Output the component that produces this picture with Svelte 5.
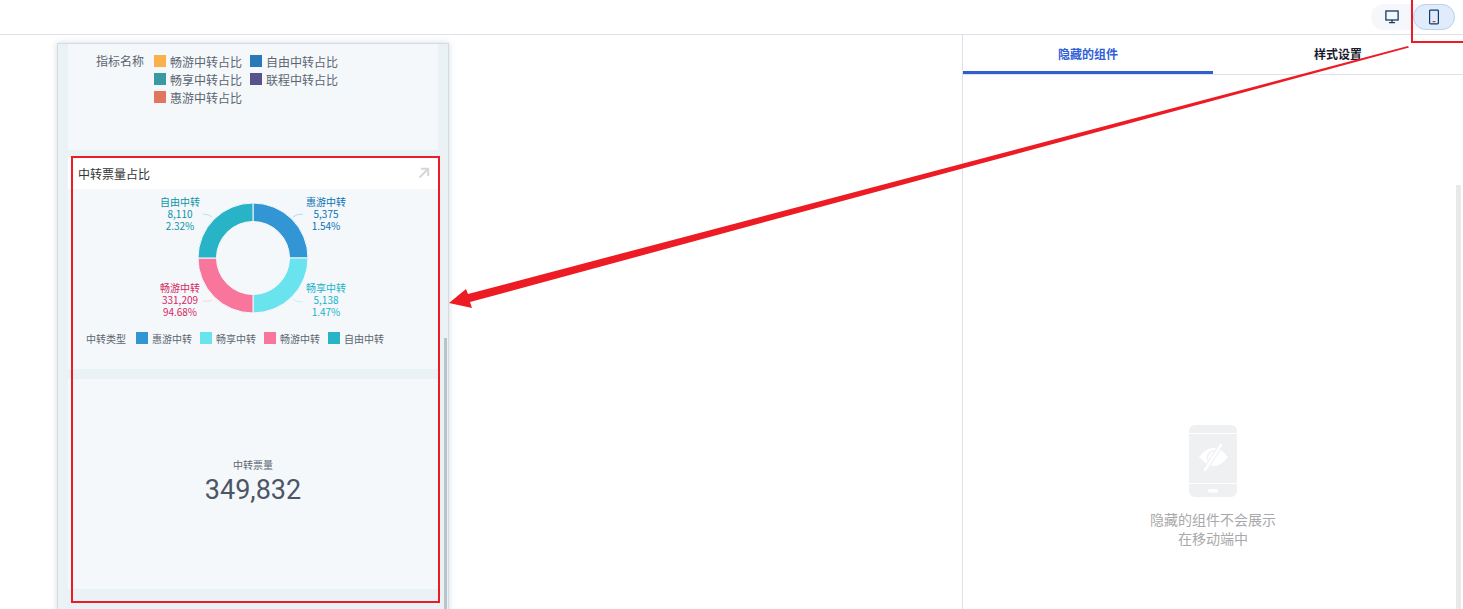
<script>
  const cx = 185;
  const cy = 69;
  const outer = 55;
  const inner = 36.5;

  const slices = [
    { name: "惠游中转", color: "#3196d3" },
    { name: "畅享中转", color: "#69e3ee" },
    { name: "畅游中转", color: "#f8769b" },
    { name: "自由中转", color: "#28b4c6" }
  ];

  const labels = [
    { lines: ["惠游中转", "5,375", "1.54%"], left: 228, top: 7, color: "#0b72b4" },
    { lines: ["畅享中转", "5,138", "1.47%"], left: 228, top: 93, color: "#17b4c8" },
    { lines: ["畅游中转", "331,209", "94.68%"], left: 82, top: 93, color: "#d9265f" },
    { lines: ["自由中转", "8,110", "2.32%"], left: 82, top: 7, color: "#0e93a6" }
  ];

  const leaders = [
    { d: "M225 28 Q228 25 235 25", color: "#b5dcf2" },
    { d: "M225 110 Q228 113 235 113", color: "#c6f2f6" },
    { d: "M144 111 Q140 113 135 112", color: "#fbd0dd" },
    { d: "M144 28 Q141 25 135 25", color: "#b5e3e9" }
  ];

  const legend = [
    { name: "畅游中转占比", color: "#fbb14b" },
    { name: "自由中转占比", color: "#2a78b8" },
    { name: "畅享中转占比", color: "#3a9aa3" },
    { name: "联程中转占比", color: "#57538c" },
    { name: "惠游中转占比", color: "#e2755f" }
  ];

  const point = (r, deg) => {
    const a = ((deg - 90) * Math.PI) / 180;
    return `${cx + r * Math.cos(a)} ${cy + r * Math.sin(a)}`;
  };

  const arc = (i) => {
    const s = i * 90;
    const e = s + 90;
    return `M${point(outer, s)} A${outer} ${outer} 0 0 1 ${point(outer, e)} L${point(inner, e)} A${inner} ${inner} 0 0 0 ${point(inner, s)} Z`;
  };
</script>

<div class="page">
  <header class="topbar">
    <div class="switch">
      <button class="mode" aria-label="桌面端">
        <svg width="14" height="14" viewBox="0 0 14 14" fill="none" stroke="#0f3a6e" stroke-width="1.3">
          <rect x="0.9" y="1" width="12.2" height="9" />
          <path d="M7 10v2.4M4 12.6h6" />
        </svg>
      </button>
      <button class="mode active" aria-label="移动端">
        <svg width="14" height="16" viewBox="0 0 14 16" fill="none" stroke="#0f3a6e" stroke-width="1.2">
          <rect x="2.6" y="1.1" width="8.8" height="13.8" rx="0.8" />
          <path d="M5.6 12.6h2.8" stroke="#c0394f" />
        </svg>
      </button>
    </div>
  </header>

  <div class="workspace">
    <main class="canvas">
      <div class="phone">
        <span class="phone-scroll"></span>
        <section class="block legend-block">
          <span class="legend-title">指标名称</span>
          <div class="legend-grid">
            {#each legend as item}
              <span class="legend-item">
                <i class="swatch" style="background: {item.color}"></i>{item.name}
              </span>
            {/each}
          </div>
        </section>

        <section class="block chart-block">
          <div class="chart-head">
            <span>中转票量占比</span>
            <svg width="12" height="12" viewBox="0 0 12 12" fill="none" stroke="#d6d7d9" stroke-width="2">
              <path d="M1.5 10.5L10 2M3 1.8H10.2V9" />
            </svg>
          </div>
          <div class="chart">
            <svg class="donut" width="370" height="142" viewBox="0 0 370 142">
              {#each slices as slice, i}
                <path d={arc(i)} fill={slice.color} stroke="#f4f8fb" stroke-width="1" />
              {/each}
              {#each leaders as line}
                <path d={line.d} fill="none" stroke={line.color} stroke-width="1" />
              {/each}
            </svg>
            {#each labels as label}
              <div class="slice-label" style="left: {label.left}px; top: {label.top}px; color: {label.color}">
                {#each label.lines as text}
                  <div>{text}</div>
                {/each}
              </div>
            {/each}
          </div>
          <div class="chart-legend">
            <span class="chart-legend-title">中转类型</span>
            {#each slices as slice}
              <span class="chart-legend-item">
                <i class="swatch" style="background: {slice.color}"></i>{slice.name}
              </span>
            {/each}
          </div>
        </section>

        <section class="block number-block">
          <div class="number-title">中转票量</div>
          <div class="number-value">349,832</div>
        </section>
      </div>
    </main>

    <aside class="panel">
      <div class="tabs">
        <div class="tab active">隐藏的组件</div>
        <div class="tab">样式设置</div>
      </div>
      <div class="empty">
        <svg width="48" height="72" viewBox="0 0 48 72">
          <rect width="48" height="72" rx="6" fill="#eff0f2" />
          <path d="M0 8.5h48M0 58.5h48" stroke="#fff" stroke-width="1" />
          <rect x="19" y="64" width="10" height="3.4" rx="1.7" fill="#fff" />
          <path d="M10 32 C16 25 20 23 25 23 C30 23 34 26 39 32 C34 38 30 41 25 41 C20 41 16 38 10 32Z" fill="#fff" />
          <path d="M19.5 36 A6.5 6.5 0 0 1 25 26" fill="none" stroke="#eff0f2" stroke-width="1.4" />
          <path d="M32 20L16 45" stroke="#eff0f2" stroke-width="5" />
          <path d="M32 20L16 45" stroke="#fff" stroke-width="2.4" stroke-linecap="round" />
        </svg>
        <p>隐藏的组件不会展示<br />在移动端中</p>
      </div>
      <span class="panel-scroll"></span>
    </aside>
  </div>

  <svg class="marks" width="1463" height="609" viewBox="0 0 1463 609" fill="none">
    <rect x="1412" y="-3" width="55" height="45" stroke="#ed1c24" stroke-width="2" />
    <rect x="72" y="157" width="367" height="445" stroke="#ed1c24" stroke-width="2" />
    <polygon points="1408,46 1409,47.5 470,302 472,308 449,303 466,289 468,294" fill="#ed1c24" />
  </svg>
</div>

<style>
  :global(body) {
    overflow: hidden;
    background: #fff;
  }

  .page {
    position: relative;
    height: 609px;
    display: flex;
    flex-direction: column;
    overflow: hidden;
    font-family: "Noto Sans CJK SC", "Noto Sans", sans-serif;
    font-size: 12px;
  }

  .topbar {
    display: flex;
    justify-content: flex-end;
    align-items: flex-start;
    padding: 4px 8px 0 0;
    height: 30px;
    border-bottom: 1px solid #dfe1ea;
  }

  .switch {
    display: flex;
    background: #f5f7fb;
    border-radius: 13px;
  }

  .mode {
    width: 42px;
    height: 26px;
    padding: 0;
    display: flex;
    align-items: center;
    justify-content: center;
    background: none;
    border: 1px solid transparent;
    border-radius: 13px;
  }

  .mode.active {
    background: #e0ebfb;
    border-color: #bdd0f0;
  }

  .workspace {
    flex: 1;
    display: flex;
    min-height: 0;
  }

  .canvas {
    flex: 0 0 963px;
    padding: 8px 0 0 57px;
    box-sizing: border-box;
    border-right: 1px solid #dfe1ea;
  }

  .phone {
    position: relative;
    width: 392px;
    height: 640px;
    box-sizing: border-box;
    padding: 0 10px;
    background: #ebf2f5;
    border: 1px solid #d5dbe3;
    box-shadow: 0 0 6px rgba(90, 100, 130, 0.25);
  }

  .phone-scroll {
    position: absolute;
    left: 386px;
    top: 294px;
    bottom: 0;
    width: 3px;
    background: #b8c4c8;
  }

  .block {
    background: #f4f8fb;
  }

  .legend-block {
    height: 106px;
    margin-bottom: 7px;
    padding: 8px 0 0 28px;
    box-sizing: border-box;
    display: flex;
    gap: 10px;
    color: #5c6570;
  }

  .legend-title {
    line-height: 18px;
  }

  .legend-grid {
    display: grid;
    grid-template-columns: 96px 96px;
    grid-auto-rows: 18px;
  }

  .legend-item {
    display: flex;
    align-items: center;
    gap: 4px;
  }

  .swatch {
    flex: none;
    width: 12px;
    height: 12px;
  }

  .chart-block {
    height: 212px;
    margin-bottom: 10px;
  }

  .chart-head {
    height: 32px;
    padding: 0 8px 0 10px;
    display: flex;
    align-items: center;
    justify-content: space-between;
    background: #fff;
    color: #333;
  }

  .chart {
    position: relative;
    height: 142px;
  }

  .donut {
    display: block;
  }

  .slice-label {
    position: absolute;
    width: 60px;
    font-size: 10px;
    line-height: 12px;
    text-align: center;
  }

  .chart-legend {
    display: flex;
    align-items: center;
    gap: 8px;
    height: 14px;
    padding-left: 18px;
    font-size: 10px;
    color: #5c6570;
  }

  .chart-legend-title {
    margin-right: 2px;
  }

  .chart-legend-item {
    display: flex;
    align-items: center;
    gap: 4px;
  }

  .number-block {
    height: 208px;
    padding-bottom: 2px;
    display: flex;
    flex-direction: column;
    align-items: center;
    justify-content: center;
  }

  .number-title {
    font-size: 10px;
    line-height: 14px;
    color: #5c6570;
  }

  .number-value {
    font-family: Roboto, sans-serif;
    font-size: 27px;
    line-height: 36px;
    color: #4d5666;
  }

  .panel {
    position: relative;
    flex: 1;
    min-width: 0;
  }

  .tabs {
    display: flex;
    height: 39px;
    border-bottom: 1px solid #dfe1ea;
  }

  .tab {
    flex: 1;
    line-height: 38px;
    text-align: center;
    font-weight: 700;
    color: #1a1a2e;
  }

  .tab.active {
    height: 36px;
    color: #3060d8;
    border-bottom: 3px solid #3060d0;
  }

  .empty {
    display: flex;
    flex-direction: column;
    align-items: center;
    padding-top: 350px;
  }

  .empty svg {
    display: block;
  }

  .empty p {
    margin: 13px 0 0;
    font-size: 14px;
    line-height: 19px;
    text-align: center;
    color: #a9a9ab;
  }

  .panel-scroll {
    position: absolute;
    right: 2px;
    top: 150px;
    bottom: 0;
    width: 5px;
    background: #e9e9e9;
  }

  .marks {
    position: absolute;
    left: 0;
    top: 0;
    pointer-events: none;
  }
</style>
